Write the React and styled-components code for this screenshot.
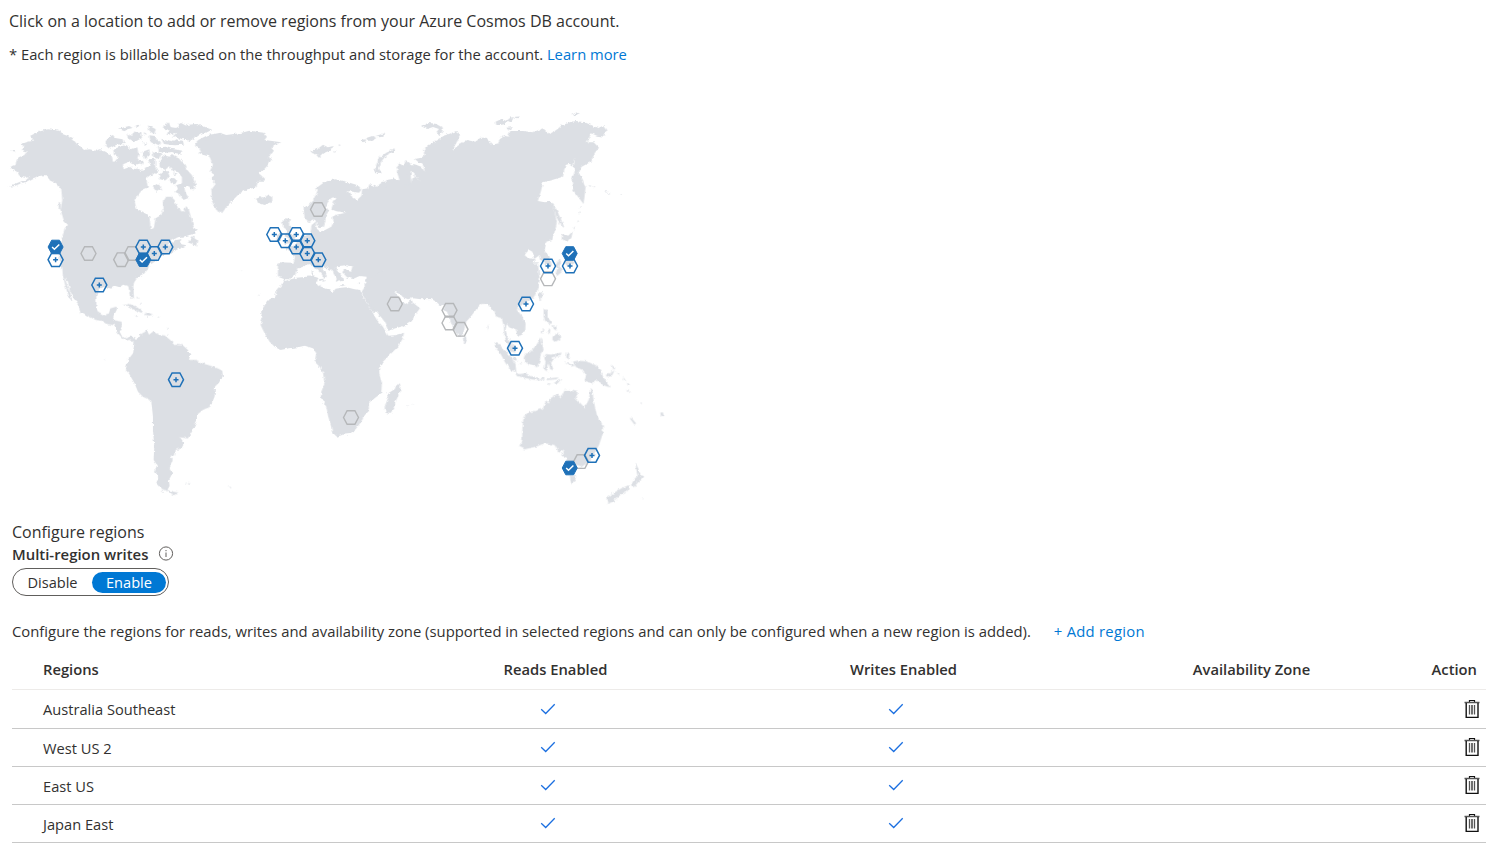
import React from "react";
import styled, { createGlobalStyle } from "styled-components";

const GlobalStyle = createGlobalStyle`
  * { box-sizing: border-box; }
  body {
    margin: 0;
    background: #fff;
    color: #323130;
    font-family: "Open Sans", "Noto Sans", sans-serif;
    font-size: 14.6px;
    line-height: 20px;
  }
`;

const Page = styled.main`
  width: 1501px;
  height: 861px;
  overflow: hidden;
  display: flex;
  flex-direction: column;
`;

const Intro = styled.header`
  height: 80px;
  padding: 10px 0 0 9px;
  white-space: nowrap;
`;

const Lead = styled.p`
  margin: 0;
  font-size: 16px;
  line-height: 22px;
`;

const Note = styled.p`
  margin: 12px 0 0;
  font-size: 14.75px;
`;

const Link = styled.a`
  color: #0078d4;
  text-decoration: none;
  cursor: pointer;
  letter-spacing: ${(p) => p.$tracking || 0}px;
`;

const MapSvg = styled.svg`
  display: block;
  width: 700px;
  height: 440px;
  flex: none;
`;

const Config = styled.section`
  padding: 1px 15px 0 12px;
`;

const LabelRow = styled.div`
  display: flex;
  align-items: center;
  gap: 10px;
  height: 22px;
`;

const Label = styled.span`
  padding-bottom: 1px;
  font-size: 14.9px;
  font-weight: 600;
  white-space: nowrap;
`;

const Toggle = styled.div`
  display: flex;
  align-items: center;
  width: 157px;
  height: 28px;
  margin-top: 3px;
  padding: 0 2px 0 0;
  border: 1px solid #605e5c;
  border-radius: 14px;
`;

const Option = styled.button`
  width: ${(p) => p.$width}px;
  height: 21px;
  padding: 0;
  border: 0;
  border-radius: 11px;
  font: inherit;
  line-height: 20px;
  color: ${(p) => (p.$active ? "#fff" : "#323130")};
  background: ${(p) => (p.$active ? "#0078d4" : "transparent")};
`;

const Hint = styled.div`
  display: flex;
  gap: 23px;
  margin: 25px 0 1px;
  font-size: 14.83px;
  white-space: nowrap;
`;

const Row = styled.div`
  display: grid;
  grid-template-columns: 369.5px 348px 348px 348px 1fr;
  align-items: center;
  height: ${(p) => p.$height}px;
  padding-top: ${(p) => (p.$head ? 7 : 0)}px;
  border-bottom: 1px solid ${(p) => (p.$head ? "#edebe9" : "#c8c8c8")};
  font-size: ${(p) => (p.$head ? 14.75 : 14.65)}px;
  font-weight: ${(p) => (p.$head ? 600 : 400)};
`;

const NameCell = styled.div`
  padding-left: 31px;
`;

const CenterCell = styled.div`
  display: flex;
  justify-content: center;
  padding-right: ${(p) => p.$shift || 0}px;
  padding-bottom: ${(p) => (p.$shift ? 1 : 0)}px;
`;

const EndCell = styled.div`
  display: flex;
  justify-content: flex-end;
  padding-right: ${(p) => p.$inset}px;
  padding-bottom: ${(p) => p.$lift || 0}px;
`;

const Icon = styled.svg`
  display: block;
  flex: none;
`;

/* Land shapes, grouped by part of the world; each group is drawn at three times its final size. */
const LAND = [
  {
    origin: [0, 100],
    shapes: [
      "M24 261L45 252 62 245 80 238 92 232 75 233 60 228 52 215 34 207 33 200 48 195 50 182 57 172 75 165 82 155 66 150 75 142 65 132 85 125 103 122 92 107 110 98 125 92 145 88 165 90 180 92 190 103 205 108 220 118 232 132 250 150 270 148 290 152 300 147 318 155 335 165 340 185 355 183 370 192 372 208 392 200 400 210 412 202 425 212 445 208 460 220 440 235 445 262 430 268 415 285 405 300 410 325 430 335 450 350 453 388 462 385 468 355 485 345 492 325 490 305 500 290 515 290 525 300 530 315 540 330 552 335 560 318 568 330 575 355 585 385 594 392 580 402 560 408 535 412 515 422 505 440 530 420 545 418 540 432 562 436 530 450 515 460 500 462 485 468 465 485 450 495 443 510 435 520 415 530 405 545 401 560 403 598 392 592 388 570 385 557 370 554 360 562 345 557 335 566 315 560 300 566 290 584 290 640 242 640 238 615 222 595 210 570 205 545 198 532 200 550 210 575 216 600 208 590 198 560 190 530 188 505 180 480 175 450 182 425 190 405 195 385 205 375 193 362 183 330 188 300 185 268 170 250 152 242 138 225 120 228 100 235 80 245 60 252 45 258Z",
      "M565 428L582 405 586 416 596 422 592 440 580 432Z",
      "M36 150L44 152 46 159 40 156Z M596 120L625 105 665 98 665 335 650 325 636 300 642 280 640 265 655 245 640 185 625 160 600 150 612 140 590 126Z",
      "M178 305L184 310 182 330 177 322Z M410 588L416 594 414 598Z M420 604L426 610 423 613Z",
    ],
  },
  {
    origin: [95, 112],
    shapes: [
      "M34 86L54 68 62 78 84 82 90 96 66 98 44 110 32 100Z",
      "M56 112L76 104 94 98 110 112 128 106 132 128 128 140 138 154 120 160 102 150 82 158 62 146 72 136 58 128Z",
      "M70 50L88 46 104 42 114 48 98 52 90 58Z M96 64L112 72 120 58 140 64 142 78 120 90 100 78Z M120 40L138 38 128 46Z",
      "M160 40L184 52 178 66 164 56Z M164 70L182 72 186 84 202 94 190 102 168 90Z M144 90L158 96 150 102Z M148 60L156 66 150 72Z",
      "M204 46L222 30 230 46 246 48 258 32 276 42 300 38 322 46 352 52 334 62 312 62 298 72 284 80 262 82 246 74 232 78 244 62 216 70 222 56Z",
      "M200 80L228 90 244 82 264 86 268 98 240 100 208 96Z M190 106L212 104 230 110 264 116 256 126 228 120 206 124 192 116Z",
      "M142 120L164 112 166 128 152 142Z M174 118L202 124 192 140 176 136Z M128 148L146 146 142 158Z",
      "M160 142L182 140 182 166 190 176 172 190 158 182 150 168 168 160Z",
      "M194 150L204 130 226 134 234 126 250 136 262 150 270 158 276 172 292 190 304 220 296 236 282 222 270 228 274 244 282 258 266 264 254 246 242 240 250 230 244 220 262 214 262 196 250 180 236 178 226 166 212 174 196 166Z",
      "M192 186L204 176 218 178 224 190 214 206 196 202Z M174 224L190 214 202 230 186 240Z M226 200L238 198 248 206 240 218 228 212Z M236 180L246 186 238 190Z",
    ],
  },
  {
    origin: [190, 110],
    shapes: [
      "M15 100L60 90 40 84 75 78 90 68 110 75 150 70 180 62 222 68 232 80 225 90 275 97 252 106 248 125 238 140 245 150 235 165 222 180 205 188 225 205 228 215 205 215 200 232 165 240 145 255 115 285 97 310 80 300 68 275 65 240 78 222 62 205 76 195 60 185 70 165 60 140 25 130 40 120 18 110Z",
      "M-10 45L20 42 45 50 65 60 40 72 18 80 -5 95Z",
      "M198 264L212 258 220 266 235 255 248 262 248 276 225 285 205 278Z",
      "M362 122L385 116 400 104 415 112 432 108 425 120 405 128 388 144 378 132 368 130Z M448 102L453 106 448 109Z M440 120L430 126 436 128Z",
      "M514 92L526 86 530 94 518 97Z M530 84L548 78 560 84 548 92 534 92Z M558 78L584 70 580 80 564 82Z",
      "M554 188L560 165 568 145 590 128 616 116 612 124 588 138 575 155 568 175 576 190 564 192Z",
      "M278 335L290 325 304 328 298 342 306 355 300 370 318 378 312 398 284 402 298 388 286 376 292 360 280 350Z",
      "M262 372L278 365 276 388 260 394Z",
      "M265 457L312 458 316 440 302 425 290 415 312 410 322 396 345 378 362 372 366 345 378 335 380 350 388 365 402 362 425 350 432 335 428 320 440 314 470 308 440 304 425 298 430 283 440 264 426 262 414 278 410 292 418 302 408 318 408 332 402 350 390 355 382 345 376 328 362 336 345 328 342 295 360 280 375 265 385 238 375 238 400 220 420 210 440 208 460 212 480 218 500 224 515 240 508 248 475 243 485 258 502 270 515 258 518 238 535 235 540 222 560 230 580 215 600 213 612 205 625 213 640 215 665 222 665 560 612 545 625 560 640 605 548 605 535 585 522 560 516 545 526 530 531 500 510 498 490 507 472 502 458 487 465 478 485 482 488 470 470 466 448 468 436 474 454 495 462 512 445 515 438 500 425 480 405 470 398 466 402 482 412 498 405 508 396 492 375 472 360 462 345 468 325 476 316 495 300 508 285 508 265 500Z",
      "M366 484L372 484 371 498 366 496Z M385 507L405 506 402 516Z M448 525L468 526 458 529Z M505 520L514 515 510 523Z",
      "M620 170L630 160 640 168 648 150 662 160 665 225 640 218 628 200 632 185Z",
      "M155 481L160 483 157 484Z M206 553L210 556 207 558Z",
    ],
  },
  {
    origin: [390, 105],
    shapes: [
      "M-10 225L10 222 30 226 22 200 25 182 38 182 50 205 58 228 45 247 62 244 66 222 78 215 94 230 76 210 62 196 58 178 75 178 95 185 106 200 100 180 85 170 76 162 95 158 105 150 100 138 115 122 135 110 150 102 162 92 180 86 200 78 212 88 205 105 188 135 215 115 230 105 258 110 272 98 290 98 310 118 325 115 340 90 355 95 362 78 400 78 430 82 460 70 480 87 500 75 515 62 540 52 560 48 585 52 610 62 625 70 640 62 650 75 645 95 622 92 605 85 592 112 612 112 628 128 615 145 605 170 590 178 575 186 568 205 580 225 588 250 582 297 565 275 550 255 546 225 555 200 552 185 556 160 548 182 540 176 528 180 520 215 490 224 460 232 455 255 445 288 465 292 485 290 492 310 502 350 498 370 488 405 470 410 465 438 480 455 487 482 470 480 455 465 450 450 434 462 428 440 418 434 405 450 415 460 438 462 425 478 440 500 448 518 445 550 -10 550Z",
      "M485 290L500 312 515 345 525 370 512 360 500 335Z M518 386L536 392 550 378 545 400 530 408 516 402Z",
      "M95 64L115 54 138 56 160 68 158 80 148 92 140 82 148 72 130 66 112 72Z",
      "M318 50L335 42 350 48 362 38 372 36 368 46 345 58 332 60 320 60Z M370 36L392 34 382 40Z M350 68L370 66 360 75Z",
      "M550 28L562 22 570 26 555 34Z M0 136L14 130 16 136 0 146Z",
      "M598 240L606 243 600 245Z M612 243L618 246 613 247Z M646 257L654 261 648 263Z M655 263L662 267 657 269Z M693 266L698 269 694 270Z",
      "M574 300L576 308 572 312Z M570 318L573 322 569 326Z M565 345L568 350 563 356Z M555 364L558 368 552 374Z",
      "M446 568L457 560 458 578 450 586Z",
    ],
  },
  {
    origin: [60, 290],
    shapes: [
      "M38 -10L118 -10 108 20 108 48 116 68 130 76 148 70 152 55 170 50 172 58 163 76 160 90 186 95 187 108 180 125 188 140 202 145 212 137 224 142 228 150 245 132 256 126 262 120 268 134 280 125 300 135 315 136 330 148 348 165 370 166 385 180 392 195 388 210 410 210 430 220 450 226 475 235 488 242 490 258 478 278 466 290 465 320 452 350 430 360 412 375 412 392 400 420 385 445 362 442 374 460 365 475 348 480 347 496 332 498 340 510 330 535 338 550 328 570 330 588 322 602 304 596 290 580 296 560 286 545 292 525 282 510 284 470 280 420 280 380 275 332 250 320 235 305 225 280 208 250 198 240 205 210 220 190 224 160 212 148 200 152 186 142 172 126 165 106 140 102 125 92 108 90 78 74 60 58 60 44 45 20Z",
      "M22 -5L30 8 38 32 30 25Z M210 -5L221 -5 221 20 212 27Z",
      "M190 46L210 42 230 50 250 64 245 68 225 60 205 48Z M254 72L266 67 285 76 272 80 256 78Z M226 78L236 78 232 81Z M292 79L301 80 296 82Z",
      "M325 112L328 118 323 120Z M324 132L328 136 324 138Z",
      "M318 598L330 602 345 606 358 608 345 616 332 610Z M302 602L315 605 310 608Z",
      "M377 578L385 580 380 583Z M386 576L393 579 387 582Z M504 588L517 595 509 593Z M132 208L138 210 134 212Z",
    ],
  },
  {
    origin: [250, 230],
    shapes: [
      "M108 152L140 143 190 139 205 143 200 160 215 170 235 178 250 186 258 176 275 173 290 172 315 178 332 180 340 200 352 220 368 245 382 270 400 290 416 317 435 316 463 308 460 325 445 350 420 375 400 395 388 415 390 435 397 460 395 490 375 505 357 520 358 540 343 555 335 575 318 598 300 612 280 614 262 620 247 606 245 590 236 560 230 530 214 503 215 485 225 460 220 428 210 410 195 395 200 370 190 355 165 347 145 352 120 355 92 360 75 350 60 335 48 315 40 300 33 285 38 265 32 250 45 225 60 208 77 200 82 178 95 165 102 150Z",
      "M345 160L350 200 365 225 385 250 405 275 416 303 430 297 465 287 485 275 500 250 511 235 495 222 483 212 487 205 478 215 468 222 458 215 445 198 433 185 440 178 450 190 460 202 475 208 490 205 515 208 545 207 560 215 570 225 585 228 580 240 592 245 602 270 612 298 628 322 640 315 645 295 650 275 665 258 682 235 690 220 712 222 720 225 730 120 400 120Z",
      "M445 458L453 470 452 485 440 510 430 540 420 552 408 548 405 530 415 505 412 492 435 478Z",
      "M640 322L648 318 652 332 646 340 641 336Z",
      "M474 525L478 527 475 529Z M490 521L493 523 490 524Z",
    ],
  },
  {
    origin: [470, 230],
    shapes: [
      "M-12 100L205 100 210 150 205 180 190 205 175 215 158 225 145 230 142 240 158 258 168 280 167 302 150 318 142 314 140 300 125 294 112 283 108 298 113 322 128 340 138 368 125 365 112 340 104 318 103 290 96 265 80 260 75 245 60 230 50 220 35 222 15 240 0 258 -12 265Z",
      "M268 88L275 95 270 108 278 125 262 138 258 128 264 112 255 110 262 98Z M285 92L312 90 318 98 300 108 284 104Z",
      "M214 188L217 190 216 208 210 206Z M144 236L152 234 150 242Z",
      "M72 338L88 342 105 360 125 382 138 402 140 428 125 420 108 400 95 375 80 355Z",
      "M136 428L150 432 168 430 185 438 212 444 208 450 185 448 160 442 142 438Z",
      "M165 372L180 368 200 345 215 322 218 340 222 360 214 370 210 395 202 412 188 405 172 400 162 388Z",
      "M222 238L234 240 234 262 246 278 240 282 226 272 222 256Z M244 285L260 288 262 302 254 298Z M250 318L268 308 272 328 258 335 248 326Z M234 296L242 302 240 315 236 306Z M222 295L212 308 218 310Z",
      "M228 372L245 374 276 368 272 378 246 382 250 392 244 398 252 420 242 418 236 400 232 424 224 418 228 395 224 385Z",
      "M292 366L300 372 296 390 290 382Z M285 398L320 406 304 410Z M310 395L325 392 350 394 378 405 395 420 400 440 415 460 420 472 400 465 382 448 365 460 345 452 350 435 340 420 320 412Z",
      "M408 435L425 428 435 420 428 435 412 440Z M424 403L438 415 432 418Z M442 424L450 432 446 433Z M460 440L470 454 464 452Z M472 456L482 466 474 465Z M472 480L484 486 478 488Z",
      "M208 446L225 442 222 450Z M230 446L268 442 260 448 232 450Z M232 458L245 462 238 465Z M252 460L270 448 276 446 264 460Z M130 380L143 388 138 392 130 388Z M152 398L158 402 152 403Z",
      "M162 560L175 548 200 542 220 535 228 515 238 520 242 505 262 492 275 502 285 480 300 480 325 486 318 505 345 532 358 508 362 475 368 478 372 510 378 540 382 555 400 590 400 610 388 645 375 670 365 688 335 712 312 705 295 700 288 680 275 678 285 658 268 668 255 645 225 640 200 650 165 658 148 650 158 635 158 600Z",
      "M300 736L320 738 316 752 305 760Z",
      "M498 700L506 715 512 735 522 738 505 758 492 772 484 765 496 745 504 738 500 720Z M478 765L475 782 455 792 430 815 418 820 410 805 430 790 455 775Z",
      "M480 564L486 564 500 581 494 583Z M572 548L580 547 582 556 574 558Z M512 516L518 520 514 522Z M518 804L522 806 519 808Z M415 818L420 820 416 824Z M54 282L57 290 55 304Z",
    ],
  },
];

const PINS = {
  closed: [
    [88.5, 253.5], [121.2, 259.7], [132, 253.5], [318, 209.5], [394.8, 304], [449.5, 310.3],
    [449.5, 323], [460.5, 329.3], [351, 417.5], [548, 278.8], [581, 461.6],
  ],
  open: [
    [55.6, 259.7], [99.3, 285], [143.3, 247], [154.3, 253.5], [165.3, 247], [176, 379.7],
    [274.3, 234.5], [285.3, 240.7], [296.3, 234.5], [307.3, 240.7], [296.3, 247], [307.3, 253.5],
    [318.3, 259.7], [548, 266], [570, 266], [526, 304], [515, 348.2], [592, 455.4],
  ],
  selected: [[55.6, 247], [143.3, 259.7], [569.7, 253.5], [569.7, 468]],
};

const HEX = "M-7.5 0L-3.9-6.8H3.9L7.5 0L3.9 6.8H-3.9Z";
const at = ([x, y]) => `translate(${x} ${y})`;

const RegionMap = () => (
  <MapSvg viewBox="0 80 700 440">
    <defs>
      <filter id="coast" x="0" y="80" width="700" height="440" filterUnits="userSpaceOnUse">
        <feTurbulence type="fractalNoise" baseFrequency="0.28" numOctaves="2" seed="4" />
        <feDisplacementMap in="SourceGraphic" scale="3.5" xChannelSelector="R" yChannelSelector="G" />
      </filter>
    </defs>
    <g fill="#dcdfe4" filter="url(#coast)" transform="translate(-0.4 0)">
      {LAND.map(({ origin, shapes }) => (
        <g key={origin.join()} transform={`${at(origin)} scale(0.33333)`}>
          {shapes.map((d) => <path key={d} d={d} />)}
        </g>
      ))}
    </g>
    {PINS.closed.map((p) => (
      <path key={p.join()} transform={at(p)} d={HEX} fill="none" stroke="#b5b7b9" strokeWidth="1.4" />
    ))}
    {PINS.open.map((p) => (
      <g key={p.join()} transform={at(p)} fill="none" stroke="#1f71b8">
        <path d={HEX} strokeWidth="1.5" />
        <path d="M-2.5 0H2.5M0-2.5V2.5" strokeWidth="1.5" />
      </g>
    ))}
    {PINS.selected.map((p) => (
      <g key={p.join()} transform={at(p)}>
        <path d={HEX} fill="#1f71b8" stroke="#1f71b8" />
        <path d="M-3.5 0L-1.2 2.3L3.7-2.5" fill="none" stroke="#fff" strokeWidth="1.5" />
      </g>
    ))}
  </MapSvg>
);

const InfoIcon = () => (
  <Icon width="16" height="16" viewBox="0 0 16 16" fill="none" stroke="#605e5c">
    <circle cx="8" cy="7.5" r="6.6" />
    <path d="M8 6.5V11M8 4V5.2" />
  </Icon>
);

const CheckIcon = () => (
  <Icon width="16" height="12" viewBox="0 0 16 12" fill="none" stroke="#1b6fe0" strokeWidth="1.3">
    <path d="M1.2 6.2L5.7 10.5L14.7 1.3" />
  </Icon>
);

const TrashIcon = () => (
  <Icon width="16" height="20" viewBox="0 0 16 20" fill="none" stroke="#111">
    <path d="M5.5 3V1.5H10.5V3" strokeWidth="1.2" />
    <path d="M0.5 3.5H15.5" strokeWidth="1.5" stroke="#555" />
    <path d="M2.2 4V18.4H14V4" strokeWidth="1.4" />
    <path d="M5.5 6V15.5M10.5 6V15.5" stroke="#555" strokeWidth="1.3" />
    <path d="M8 6V15.5" strokeWidth="1.2" />
  </Icon>
);

const REGIONS = ["Australia Southeast", "West US 2", "East US", "Japan East"];

export default function App() {
  return (
    <Page>
      <GlobalStyle />
      <Intro>
        <Lead>Click on a location to add or remove regions from your Azure Cosmos DB account.</Lead>
        <Note>
          * Each region is billable based on the throughput and storage for the account. <Link>Learn more</Link>
        </Note>
      </Intro>
      <RegionMap />
      <Config>
        <Lead>Configure regions</Lead>
        <LabelRow>
          <Label>Multi-region writes</Label>
          <InfoIcon />
        </LabelRow>
        <Toggle>
          <Option $width={79}>Disable</Option>
          <Option $width={74} $active>Enable</Option>
        </Toggle>
        <Hint>
          <span>
            Configure the regions for reads, writes and availability zone (supported in selected regions and can only be configured when a new region is added).
          </span>
          <Link $tracking={0.25}>+ Add region</Link>
        </Hint>
        <Row $head $height={48}>
          <NameCell>Regions</NameCell>
          <CenterCell>Reads Enabled</CenterCell>
          <CenterCell>Writes Enabled</CenterCell>
          <CenterCell>Availability Zone</CenterCell>
          <EndCell $inset={9}>Action</EndCell>
        </Row>
        {REGIONS.map((name, i) => (
          <Row key={name} $height={i === 0 ? 39 : 38}>
            <NameCell>{name}</NameCell>
            <CenterCell $shift={15}><CheckIcon /></CenterCell>
            <CenterCell $shift={15}><CheckIcon /></CenterCell>
            <CenterCell />
            <EndCell $inset={6.5} $lift={1}><TrashIcon /></EndCell>
          </Row>
        ))}
      </Config>
    </Page>
  );
}
